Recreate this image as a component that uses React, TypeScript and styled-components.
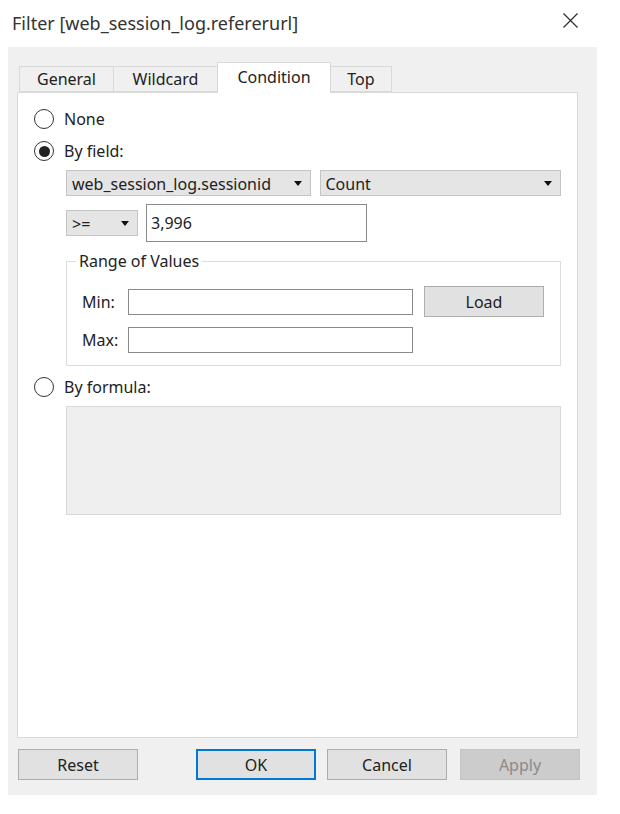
import React from "react";
import styled, { createGlobalStyle } from "styled-components";

const Global = createGlobalStyle`
  html, body { margin: 0; padding: 0; background: #ffffff; }
  body { font-family: "Noto Sans", "Open Sans", sans-serif; color: #222; }
  * { box-sizing: border-box; }
`;

const Page = styled.div`
  width: 620px;
  height: 814px;
  background: #fff;
  display: flex;
  flex-direction: column;
`;

const TitleBar = styled.div`
  height: 47px;
  display: flex;
  align-items: center;
  justify-content: space-between;
  padding: 0 42px 0 12px;
`;

const Title = styled.div`
  font-family: "Noto Sans", sans-serif;
  font-size: 18px;
  color: #333;
  margin-top: -2px;
`;

const CloseIcon = styled.svg`
  width: 15px;
  height: 15px;
  margin-top: -6px;
`;

const Body = styled.div`
  margin-left: 8px;
  width: 589px;
  height: 748px;
  background: #f0f0f0;
  padding: 15px 0 15px 9px;
  display: flex;
  flex-direction: column;
`;

const TabStrip = styled.div`
  display: flex;
  align-items: flex-end;
  height: 30px;
  padding-left: 2px;
  position: relative;
  z-index: 1;
`;

const Tab = styled.div<{ $w: number; $active?: boolean }>`
  width: ${(p) => p.$w}px;
  height: ${(p) => (p.$active ? 31 : 26)}px;
  margin-bottom: ${(p) => (p.$active ? -1 : 0)}px;
  margin-left: -1px;
  background: ${(p) => (p.$active ? "#fff" : "#f0f0f0")};
  border: 1px solid #d9d9d9;
  border-bottom: ${(p) => (p.$active ? "none" : "1px solid #d9d9d9")};
  display: flex;
  align-items: center;
  justify-content: center;
  padding-bottom: ${(p) => (p.$active ? 2 : 1)}px;
  font-size: 16px;
  color: #222;
  &:first-child { margin-left: 0; }
`;

const Panel = styled.div`
  width: 561px;
  height: 646px;
  background: #fff;
  border: 1px solid #d9d9d9;
  padding: 16px 16px 0 16px;
  display: flex;
  flex-direction: column;
`;

const RadioRow = styled.label<{ $mt?: number }>`
  display: flex;
  align-items: center;
  gap: 10px;
  height: 20px;
  margin-top: ${(p) => p.$mt ?? 0}px;
  font-size: 16px;
  color: #222;
`;

const RadioCircle = styled.span<{ $checked?: boolean }>`
  width: 20px;
  height: 20px;
  border-radius: 50%;
  border: 1.5px solid #333;
  background: #fff;
  display: flex;
  align-items: center;
  justify-content: center;
  &::after {
    content: "";
    display: ${(p) => (p.$checked ? "block" : "none")};
    width: 11px;
    height: 11px;
    border-radius: 50%;
    background: #222;
  }
`;

const Indented = styled.div`
  margin-left: 32px;
  width: 495px;
  display: flex;
  flex-direction: column;
`;

const SelectRow = styled.div<{ $mt: number; $gap: number }>`
  display: flex;
  align-items: center;
  gap: ${(p) => p.$gap}px;
  margin-top: ${(p) => p.$mt}px;
`;

const Select = styled.div<{ $w: number }>`
  width: ${(p) => p.$w}px;
  height: 26px;
  background: #e5e5e5;
  border: 1px solid #c4c4c4;
  display: flex;
  align-items: center;
  justify-content: space-between;
  padding: 1px 8px 0 5px;
  font-size: 16px;
  color: #222;
`;

const Caret = styled.span`
  width: 0;
  height: 0;
  border-left: 4.5px solid transparent;
  border-right: 4.5px solid transparent;
  border-top: 5px solid #111;
`;

const TextBox = styled.div<{ $w: number; $h: number }>`
  width: ${(p) => p.$w}px;
  height: ${(p) => p.$h}px;
  background: #fff;
  border: 1px solid #8a8a8a;
  display: flex;
  align-items: center;
  padding-left: 4px;
  font-size: 16px;
  color: #222;
`;

const Group = styled.fieldset`
  margin: 10px 0 0 0;
  border: 1px solid #dcdcdc;
  padding: 0 17px 12px 15px;
  min-width: 0;
`;

const Legend = styled.legend`
  font-size: 16px;
  line-height: 18px;
  padding: 0 3px;
  margin-left: -6px;
  color: #222;
`;

const RangeGrid = styled.div`
  display: grid;
  grid-template-columns: 35px 285px 120px;
  column-gap: 11px;
  row-gap: 10px;
  grid-template-rows: 31px 26px;
  align-items: center;
  margin-top: 16px;
`;

const FieldLabel = styled.span`
  font-size: 16px;
  color: #222;
`;

const Button = styled.div<{ $w?: number; $primary?: boolean; $disabled?: boolean; $ml?: number }>`
  width: ${(p) => p.$w ?? 120}px;
  height: 31px;
  margin-left: ${(p) => p.$ml ?? 0}px;
  background: ${(p) => (p.$disabled ? "#cccccc" : "#e1e1e1")};
  border: ${(p) => (p.$primary ? "2px solid #0078d7" : p.$disabled ? "1px solid #c4c4c4" : "1px solid #adadad")};
  color: ${(p) => (p.$disabled ? "#8a8a8a" : "#222")};
  display: flex;
  align-items: center;
  justify-content: center;
  font-size: 16px;
`;

const FormulaBox = styled.div`
  margin: 9px 0 0 32px;
  width: 495px;
  height: 109px;
  background: #efefef;
  border: 1px solid #d9d9d9;
`;

const ButtonRow = styled.div`
  display: flex;
  align-items: center;
  margin-top: 11px;
  padding-left: 1px;
`;

export default function App() {
  return (
    <Page>
      <Global />
      <TitleBar>
        <Title>Filter [web_session_log.refererurl]</Title>
        <CloseIcon viewBox="0 0 15 15">
          <path d="M0.5 0.5 L14.5 14.5 M14.5 0.5 L0.5 14.5" stroke="#333" strokeWidth="1.3" fill="none" />
        </CloseIcon>
      </TitleBar>
      <Body>
        <TabStrip>
          <Tab $w={95}>General</Tab>
          <Tab $w={105}>Wildcard</Tab>
          <Tab $w={114} $active>Condition</Tab>
          <Tab $w={62}>Top</Tab>
        </TabStrip>
        <Panel>
          <RadioRow>
            <RadioCircle />
            None
          </RadioRow>
          <RadioRow $mt={12}>
            <RadioCircle $checked />
            By field:
          </RadioRow>
          <Indented>
            <SelectRow $mt={9} $gap={9}>
              <Select $w={245}>
                web_session_log.sessionid <Caret />
              </Select>
              <Select $w={242}>
                Count <Caret />
              </Select>
            </SelectRow>
            <SelectRow $mt={8} $gap={8}>
              <Select $w={72}>
                &gt;= <Caret />
              </Select>
              <TextBox $w={221} $h={38}>3,996</TextBox>
            </SelectRow>
            <Group>
              <Legend>Range of Values</Legend>
              <RangeGrid>
                <FieldLabel>Min:</FieldLabel>
                <TextBox $w={285} $h={26} />
                <Button $w={120}>Load</Button>
                <FieldLabel>Max:</FieldLabel>
                <TextBox $w={285} $h={26} />
              </RangeGrid>
            </Group>
          </Indented>
          <RadioRow $mt={11}>
            <RadioCircle />
            By formula:
          </RadioRow>
          <FormulaBox />
        </Panel>
        <ButtonRow>
          <Button>Reset</Button>
          <Button $primary $ml={58}>OK</Button>
          <Button $ml={11}>Cancel</Button>
          <Button $disabled $ml={13}>Apply</Button>
        </ButtonRow>
      </Body>
    </Page>
  );
}
